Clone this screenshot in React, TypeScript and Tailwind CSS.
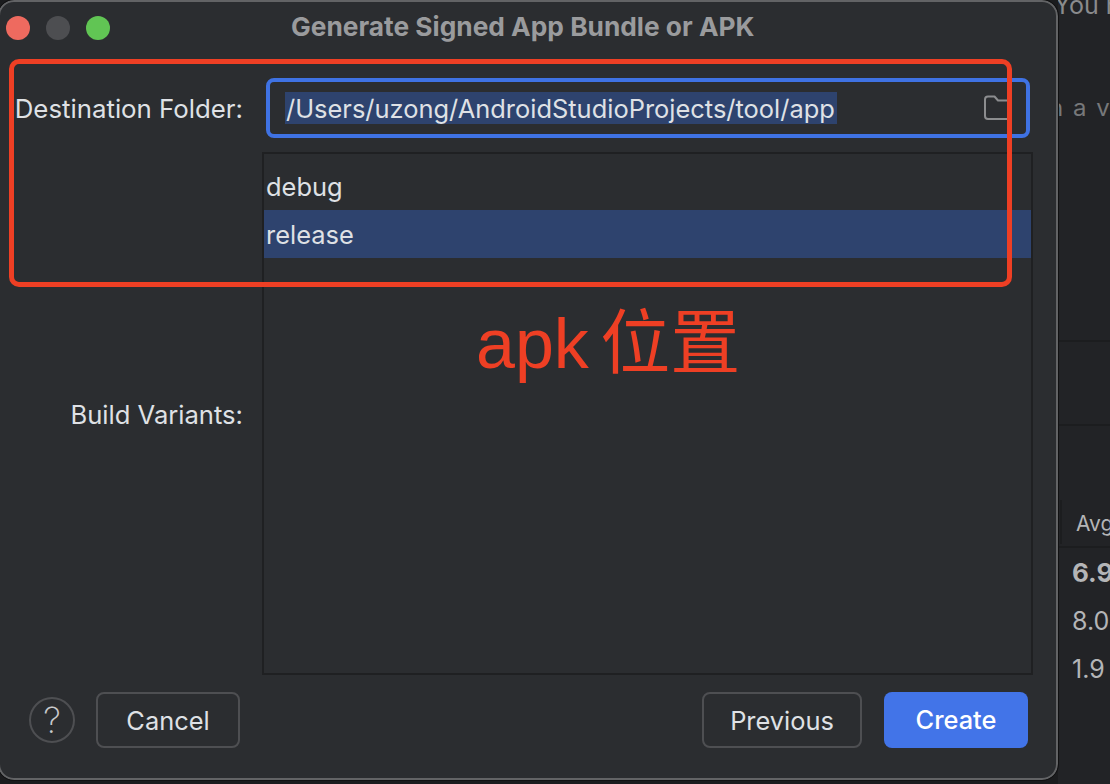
const font = "font-['Inter','Noto_Sans_CJK_SC',sans-serif]";

function FolderIcon() {
  return (
    <svg width="30" height="26" viewBox="0 0 30 26" fill="none" className="absolute right-[13px] top-[12px]">
      <path d="M2 5.5C2 3.5 3 2.5 5 2.5H11.5L15 6.5H25C27 6.5 28 7.5 28 9.5V22C28 24 27 25 25 25H5C3 25 2 24 2 22V5.5Z" stroke="#8c8d8f" strokeWidth="2" strokeLinejoin="round" />
    </svg>
  );
}

function OutlineButton({ label, width }: { label: string; width: string }) {
  return (
    <button className={`${width} h-[56px] rounded-[8px] border-2 border-[#4e4f52] pt-[3px] text-[25.4px] text-[#dfe1e5]`}>{label}</button>
  );
}

export default function App() {
  return (
    <div className={`${font} relative flex h-[784px] w-[1110px] overflow-hidden bg-[#1b1c1e]`}>
      <div className="relative z-10 -ml-[2px] flex h-[780px] w-[1060px] shrink-0 flex-col rounded-[16px] border-2 border-[#626365] bg-[#2b2d30] outline outline-1 outline-[#111112]">
        <div className="flex h-[52px] shrink-0 items-center pl-[6px]">
          <div className="flex gap-[16px]">
            <span className="h-[24px] w-[24px] rounded-full bg-[#ee6a5f]" />
            <span className="h-[24px] w-[24px] rounded-full bg-[#4d4e51]" />
            <span className="h-[24px] w-[24px] rounded-full bg-[#61c554]" />
          </div>
          <div className="ml-[181px] whitespace-nowrap pb-[2px] text-[26.3px] font-bold text-[#9a9b9d]">Generate Signed App Bundle or APK</div>
        </div>

        <div className="mt-[24px] flex h-[60px] shrink-0 items-center">
          <div className="w-[243px] shrink-0 pt-[3px] text-right text-[25.8px] text-[#dfe1e5]">Destination Folder:</div>
          <div className="relative ml-[23px] flex h-[60px] w-[764px] shrink-0 items-center rounded-[8px] border-4 border-[#3f72e3] pl-[15px]">
            <span className="whitespace-nowrap bg-[#2e436e] pl-[1px] pr-[2px] text-[25.45px] leading-[32px] text-[#dfe1e5]"><span className="relative top-[1px]">/Users/uzong/AndroidStudioProjects/tool/app</span></span>
            <FolderIcon />
          </div>
        </div>

        <div className="mt-[14px] flex h-[523px] shrink-0 items-center">
          <div className="w-[243px] shrink-0 pt-[4px] text-right text-[25.6px] text-[#dfe1e5]">Build Variants:</div>
          <div className="ml-[19px] h-[523px] w-[771px] shrink-0 border-2 border-[#1f2022] pt-[8px] text-[25.45px] text-[#dfe1e5]">
            <div className="flex h-[48px] items-center pl-[2px] pt-[2px]">debug</div>
            <div className="flex h-[48px] items-center bg-[#2e436e] pl-[2px] pt-[2px]">release</div>
          </div>
        </div>

        <div className="mt-[17px] flex h-[56px] shrink-0 items-center pl-[29px]">
          <div className="flex h-[46px] w-[46px] items-center justify-center rounded-full border-2 border-[#4e4f52] text-[36px] font-extralight text-[#c8c9cc]">?</div>
          <div className="ml-[21px]"><OutlineButton label="Cancel" width="w-[144px]" /></div>
          <div className="ml-[462px]"><OutlineButton label="Previous" width="w-[160px]" /></div>
          <button className="ml-[22px] h-[56px] w-[144px] rounded-[8px] bg-[#4274e8] pt-[1px] text-[25.4px] font-medium text-white">Create</button>
        </div>
      </div>

      <div className="relative flex h-[784px] flex-1 flex-col overflow-hidden bg-[#222326] text-[25px] text-[#8d8e90]">
        <div className="-ml-[4px] -mt-[13px] h-[40px] whitespace-nowrap text-[25px] text-[#8a8b8d]">You h</div>
        <div className="-ml-[9px] mt-[63px] h-[36px] whitespace-nowrap text-[24px] tracking-[1.5px] text-[#77787a]">n a v</div>
        <div className="mt-[214px] h-[86px] border-y-2 border-[#1c1d1f]" />
        <div className="h-[120px]">
          <div className="mt-[83px] whitespace-nowrap pl-[18px] text-[21px] leading-[30px] text-[#b4b5b7]">Avg</div>
        </div>
        <div className="border-t-2 border-[#1c1d1f] pl-[14px] text-[#b4b5b7]">
          <div className="mt-[10px] h-[48px] text-[26px] font-bold leading-[30px]">6.9</div>
          <div className="h-[48px] leading-[30px]">8.0</div>
          <div className="leading-[30px]">1.9</div>
        </div>
        <div className="absolute left-[2px] top-[500px] h-[44px] w-[2px] bg-[#1c1d1f]" />
      </div>

      <div className="pointer-events-none absolute left-[9px] top-[59px] z-20 h-[228px] w-[1003px] rounded-[10px] border-[5px] border-[#ee3f24]" />
      <div className="pointer-events-none absolute left-[476px] top-[296px] z-20 whitespace-nowrap font-['Liberation_Sans','Noto_Sans_CJK_SC',sans-serif] text-[70px] leading-[96px] text-[#ee3f24] [word-spacing:-8px]">apk 位置</div>
    </div>
  );
}
